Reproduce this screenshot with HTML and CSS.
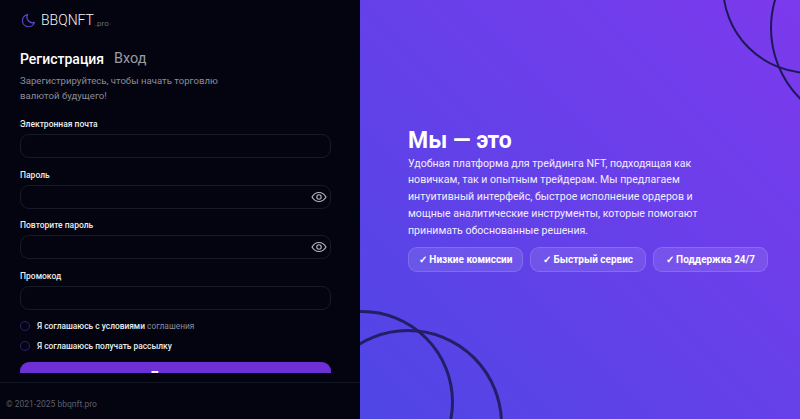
FILE: index.html
```html
<!DOCTYPE html>
<html lang="ru">
<head>
  <meta charset="UTF-8" />
  <meta name="viewport" content="width=device-width, initial-scale=1.0" />
  <title>BBQNFT</title>
  <link rel="stylesheet" href="styles.css">
</head>
<body>
  <div class="page">
    <aside class="side">
      <div class="side-scroll">
        <div class="logo">
          <svg class="logo-icon" width="15" height="15" viewBox="0 0 24 24" fill="none">
            <path d="M10.500 2.500a9.800 9.800 0 1 0 11 12.500A9 9 0 0 1 10.500 2.500z" stroke="#5b46c9" stroke-width="2" stroke-linejoin="round" />
          </svg>
          <span class="logo-name">BBQNFT</span><span class="logo-pro">.pro</span>
        </div>
        <div class="tabs">
          <span class="tab active">Регистрация</span>
          <span class="tab">Вход</span>
        </div>
        <p class="lead">Зарегистрируйтесь, чтобы начать торговлю валютой будущего!</p>
        <form class="form">
          <div class="field">
            <label>Электронная почта</label>
            <div class="input"></div>
          </div>
          <div class="field">
            <label>Пароль</label>
            <div class="input">
              <svg class="eye" width="16" height="16" viewBox="0 0 24 24" fill="none" stroke="#b4b6c0" stroke-width="1.700">
                <path d="M1.500 12C4 7.500 7.500 5.200 12 5.200s8 2.300 10.500 6.800C20 16.500 16.500 18.800 12 18.800S4 16.500 1.500 12z" />
                <circle cx="12" cy="12" r="3.300" />
              </svg>
            </div>
          </div>
          <div class="field">
            <label>Повторите пароль</label>
            <div class="input">
              <svg class="eye" width="16" height="16" viewBox="0 0 24 24" fill="none" stroke="#b4b6c0" stroke-width="1.700">
                <path d="M1.500 12C4 7.500 7.500 5.200 12 5.200s8 2.300 10.500 6.800C20 16.500 16.500 18.800 12 18.800S4 16.500 1.500 12z" />
                <circle cx="12" cy="12" r="3.300" />
              </svg>
            </div>
          </div>
          <div class="field">
            <label>Промокод</label>
            <div class="input"></div>
          </div>
          <div class="check-row"><span class="radio"></span><span class="check-text">Я соглашаюсь с условиями <span class="muted">соглашения</span></span></div>
          <div class="check-row"><span class="radio"></span><span class="check-text">Я соглашаюсь получать рассылку</span></div>
          <button class="submit" type="button">Дальше</button>
        </form>
      </div>
      <footer class="side-footer">© 2021-2025 bbqnft.pro</footer>
    </aside>
    <main class="promo">
      <div class="ring ring-a"></div>
      <div class="ring ring-b"></div>
      <div class="ring ring-c"></div>
      <div class="ring ring-d"></div>
      <div class="promo-body">
        <h1>Мы — это</h1>
        <p>Удобная платформа для трейдинга NFT, подходящая как новичкам, так и опытным трейдерам. Мы предлагаем интуитивный интерфейс, быстрое исполнение ордеров и мощные аналитические инструменты, которые помогают принимать обоснованные решения.</p>
        <div class="chips">
          <span class="chip">✓ Низкие комиссии</span>
          <span class="chip">✓ Быстрый сервис</span>
          <span class="chip">✓ Поддержка 24/7</span>
        </div>
      </div>
    </main>
  </div>
</body>
</html>
```

FILE: styles.css
```css
* {
  margin: 0;
  padding: 0;
  box-sizing: border-box;
}
html,
body {
  height: 100%;
  overflow: hidden;
}
body {
  font-family: Roboto, 'Noto Sans', sans-serif;
  background-color: #03040f;
  color: white;
}
.page {
  display: flex;
  height: 100vh;
}
.side {
  width: 360px;
  flex-shrink: 0;
  display: flex;
  flex-direction: column;
  background-color: #03040f;
}
.side-scroll {
  height: 373px;
  overflow: hidden;
  padding: 10px 29px 0 20px;
}
.logo {
  display: flex;
  align-items: center;
  height: 20px;
}
.logo-icon {
  margin: 0 5px 0 1px;
}
.logo-name {
  font-size: 14px;
  font-weight: 300;
  color: #f4f4f6;
}
.logo-pro {
  font-size: 8px;
  color: #6c6e7a;
  margin: 6px 0 0 1px;
}
.tabs {
  display: flex;
  gap: 10px;
  margin-top: 19px;
  font-size: 14px;
  line-height: 20px;
}
.tab {
  color: #9a9ca6;
  font-size: 14.400px;
}
.tab.active {
  color: white;
  font-size: 14px;
  font-weight: 500;
}
.lead {
  margin-top: 5px;
  width: 215px;
  font-size: 9.600px;
  line-height: 14.500px;
  color: #8b8d98;
}
.form {
  margin-top: 15px;
}
.field {
  margin-bottom: 10.500px;
}
.field label {
  display: block;
  font-size: 8.500px;
  line-height: 12px;
  font-weight: 500;
  color: #eceded;
  margin-bottom: 4px;
}
.input {
  position: relative;
  height: 24px;
  border: 1px solid #171a27;
  border-radius: 9px;
}
.eye {
  position: absolute;
  right: 3px;
  top: 3px;
}
.check-row {
  display: flex;
  align-items: center;
  gap: 7px;
  height: 12px;
  margin-bottom: 7.500px;
}
.field + .check-row {
  margin-top: 10px;
}
.radio {
  width: 10px;
  height: 10px;
  border: 1px solid #2f1f78;
  border-radius: 50%;
}
.check-text {
  font-size: 8.400px;
  font-weight: 500;
  color: #eceded;
}
.muted {
  color: #8b8d98;
  font-weight: 400;
}
.submit {
  display: block;
  width: 100%;
  height: 30px;
  margin-top: 10px;
  border: none;
  border-radius: 9px;
  background-color: #6d2fd6;
  color: white;
  font-family: inherit;
  font-size: 14px;
  font-weight: 700;
}
.side-footer {
  margin-top: 9px;
  padding: 16px 6px 0;
  flex: 1;
  border-top: 1px solid #151722;
  font-size: 8.500px;
  color: #5d5f6b;
}
.promo {
  position: relative;
  flex: 1;
  display: flex;
  align-items: center;
  overflow: hidden;
  padding-left: 48px;
  background: linear-gradient(45deg, #4f46e5, #7c3aed);
}
.ring {
  position: absolute;
  border: 2.500px solid #1e1858;
  border-radius: 50%;
}
.ring-a {
  left: 362px;
  top: -102px;
  width: 176px;
  height: 176px;
}
.ring-b {
  left: 410px;
  top: -73px;
  width: 202px;
  height: 202px;
}
.ring-c {
  left: -90px;
  top: 310px;
  width: 184px;
  height: 184px;
  border-width: 3px;
  border-color: #221f66;
}
.ring-d {
  left: -47px;
  top: 329px;
  width: 190px;
  height: 190px;
  border-width: 3px;
  border-color: #221f66;
}
.promo-body {
  position: relative;
  width: 360px;
  padding-bottom: 16.500px;
}
.promo h1 {
  font-size: 23px;
  line-height: 22px;
  font-weight: 700;
}
.promo p {
  margin-top: 3.500px;
  font-size: 10.600px;
  line-height: 16.800px;
  color: #f1edff;
  width: 300px;
}
.chips {
  display: flex;
  gap: 7px;
  margin-top: 8px;
}
.chip {
  flex: 1;
  height: 25px;
  display: flex;
  align-items: center;
  justify-content: center;
  border: 1px solid rgba(255, 255, 255, 0.14);
  border-radius: 9px;
  background: rgba(255, 255, 255, 0.1);
  font-size: 10px;
  font-weight: 700;
}
```
